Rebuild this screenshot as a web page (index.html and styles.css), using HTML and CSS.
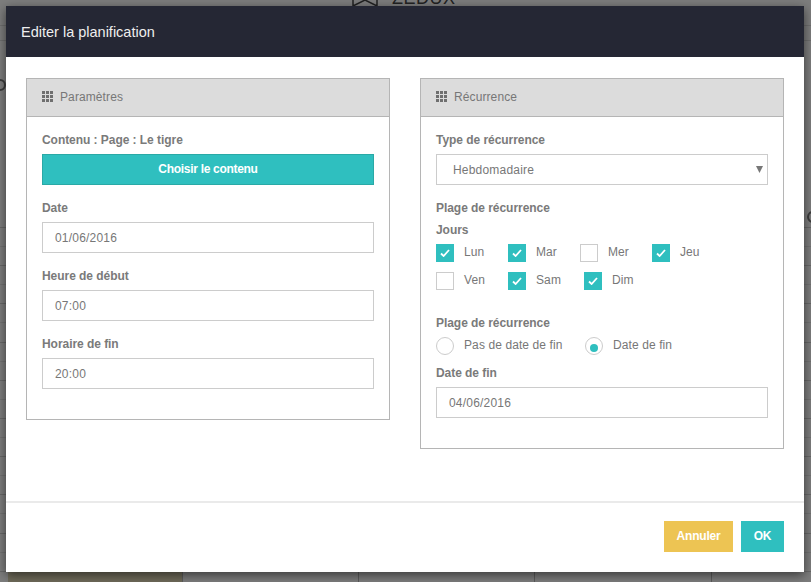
FILE: index.html
```html
<!DOCTYPE html>
<html lang="fr">
<head>
<meta charset="utf-8">
<title>Editer la planification</title>
<link rel="stylesheet" href="styles.css">
</head>
<body>
<div class="backdrop">
  <svg class="bg-star" width="26" height="7" viewBox="0 0 26 7"><path d="M1 -8V6L13 0 25 6V-8" fill="none" stroke="#222" stroke-width="1.500"/></svg>
  <span class="bg-logo">ZEDUX</span>
  <div class="bg-line bg-line-1"></div>
  <div class="bg-line bg-line-2"></div>
  <span class="bg-ring bg-ring-left"></span>
  <span class="bg-ring bg-ring-right"></span>
  <div class="bg-grid"></div>
  <div class="bg-block"></div>
</div>
<div class="modal">
  <header class="modal-head">Editer la planification</header>
  <div class="modal-body">
    <section class="panel panel-left">
      <div class="panel-head">
        <svg class="grid-icon" width="11" height="11" viewBox="0 0 11 11"><path d="M0 0h3v3H0zM4 0h3v3H4zM8 0h3v3H8zM0 4h3v3H0zM4 4h3v3H4zM8 4h3v3H8zM0 8h3v3H0zM4 8h3v3H4zM8 8h3v3H8z" fill="#6f6f6f"/></svg>
        <span>Paramètres</span>
      </div>
      <div class="panel-body">
        <div class="field">
          <div class="label">Contenu : Page : Le tigre</div>
          <button class="btn-wide">Choisir le contenu</button>
        </div>
        <div class="field">
          <div class="label">Date</div>
          <div class="input">01/06/2016</div>
        </div>
        <div class="field">
          <div class="label">Heure de début</div>
          <div class="input">07:00</div>
        </div>
        <div class="field">
          <div class="label">Horaire de fin</div>
          <div class="input">20:00</div>
        </div>
      </div>
    </section>
    <section class="panel panel-right">
      <div class="panel-head">
        <svg class="grid-icon" width="11" height="11" viewBox="0 0 11 11"><path d="M0 0h3v3H0zM4 0h3v3H4zM8 0h3v3H8zM0 4h3v3H0zM4 4h3v3H4zM8 4h3v3H8zM0 8h3v3H0zM4 8h3v3H4zM8 8h3v3H8z" fill="#6f6f6f"/></svg>
        <span>Récurrence</span>
      </div>
      <div class="panel-body">
        <div class="field">
          <div class="label">Type de récurrence</div>
          <div class="input select"><span>Hebdomadaire</span><svg class="caret" width="7" height="7" viewBox="0 0 7 7"><path d="M0 0h7L3.500 7z" fill="#777"/></svg></div>
        </div>
        <div class="label label-tight">Plage de récurrence</div>
        <div class="label label-days">Jours</div>
        <div class="days">
          <div class="check-row">
            <div class="check-item w72"><span class="box on"><svg width="10" height="8" viewBox="0 0 10 8"><path d="M1 4.500 3.600 7 9 1" fill="none" stroke="#fff" stroke-width="1.800"/></svg></span><span class="opt">Lun</span></div>
            <div class="check-item w72"><span class="box on"><svg width="10" height="8" viewBox="0 0 10 8"><path d="M1 4.500 3.600 7 9 1" fill="none" stroke="#fff" stroke-width="1.800"/></svg></span><span class="opt">Mar</span></div>
            <div class="check-item w72"><span class="box"></span><span class="opt">Mer</span></div>
            <div class="check-item"><span class="box on"><svg width="10" height="8" viewBox="0 0 10 8"><path d="M1 4.500 3.600 7 9 1" fill="none" stroke="#fff" stroke-width="1.800"/></svg></span><span class="opt">Jeu</span></div>
          </div>
          <div class="check-row">
            <div class="check-item w72"><span class="box"></span><span class="opt">Ven</span></div>
            <div class="check-item w76"><span class="box on"><svg width="10" height="8" viewBox="0 0 10 8"><path d="M1 4.500 3.600 7 9 1" fill="none" stroke="#fff" stroke-width="1.800"/></svg></span><span class="opt">Sam</span></div>
            <div class="check-item"><span class="box on"><svg width="10" height="8" viewBox="0 0 10 8"><path d="M1 4.500 3.600 7 9 1" fill="none" stroke="#fff" stroke-width="1.800"/></svg></span><span class="opt">Dim</span></div>
          </div>
        </div>
        <div class="label label-tight">Plage de récurrence</div>
        <div class="radio-row">
          <div class="check-item w149"><span class="radio"></span><span class="opt">Pas de date de fin</span></div>
          <div class="check-item"><span class="radio on"></span><span class="opt">Date de fin</span></div>
        </div>
        <div class="field">
          <div class="label">Date de fin</div>
          <div class="input">04/06/2016</div>
        </div>
      </div>
    </section>
  </div>
  <footer class="modal-foot">
    <button class="btn btn-cancel">Annuler</button>
    <button class="btn btn-ok">OK</button>
  </footer>
</div>
</body>
</html>
```
FILE: styles.css
```css
* { box-sizing: border-box; }
html, body { margin: 0; height: 100%; }
body {
  width: 811px; height: 582px; overflow: hidden; position: relative;
  background: #7d7d7d;
  font-family: "Liberation Sans", Arial, sans-serif;
  font-size: 12px; color: #777;
}
.backdrop { position: absolute; inset: 0; overflow: hidden; }
.bg-star { position: absolute; left: 352px; top: 0; }
.bg-logo { position: absolute; left: 392px; top: -12px; font-size: 18px; line-height: 20px; color: #222; letter-spacing: .5px; }
.bg-line { position: absolute; left: 0; right: 0; height: 1px; background: #6e6e6e; }
.bg-line-1 { top: 25px; }
.bg-line-2 { top: 40px; }
.bg-ring { position: absolute; width: 12px; height: 12px; border: 2px solid #3c3c3c; border-radius: 50%; }
.bg-ring-left { left: -6px; top: 79px; }
.bg-ring-right { left: 807px; top: 211px; }
.bg-grid {
  position: absolute; left: 0; right: 0; top: 227px; bottom: 0;
  background-image:
    linear-gradient(#5c5c5c, #5c5c5c), linear-gradient(#5c5c5c, #5c5c5c),
    linear-gradient(#5c5c5c, #5c5c5c), linear-gradient(#5c5c5c, #5c5c5c),
    repeating-linear-gradient(to bottom, #686868 0 1px, transparent 1px 38.200px),
    repeating-linear-gradient(to bottom, transparent 0 19px, #727272 19px 20px, transparent 20px 38.200px);
  background-size: 1px 100%, 1px 100%, 1px 100%, 1px 100%, auto, auto;
  background-position: 182px 0, 358px 0, 534px 0, 711px 0, 0 0, 0 0;
  background-repeat: no-repeat, no-repeat, no-repeat, no-repeat, repeat, repeat;
}
.bg-block {
  position: absolute; left: 8px; bottom: 0; width: 174px; height: 10px; background: #6f6b5a;
}
.modal {
  position: absolute; left: 6px; top: 6px; width: 798px; height: 566px;
  background: #fff; box-shadow: 0 3px 10px rgba(0,0,0,.55);
  display: flex; flex-direction: column;
}
.modal-head {
  height: 51px; flex: none; background: #252734; color: #eee;
  font-size: 14.500px; padding: 0 15px; display: flex; align-items: center;
}
.modal-body { flex: 1; display: flex; align-items: flex-start; gap: 30px; padding: 21px 20px 0; }
.panel { width: 364px; border: 1px solid #b5b5b5; }
.panel-left { height: 342px; }
.panel-right { height: 371px; }
.panel-head {
  height: 38px; background: #dcdcdc; border-bottom: 1px solid #b5b5b5;
  display: flex; align-items: center; gap: 7px; padding: 0 0 2px 15px; letter-spacing: .1px;
}
.grid-icon { flex: none; }
.panel-body { padding: 16px 15px 0; }
.field { margin-bottom: 16px; }
.label { font-weight: 700; line-height: 14px; height: 14px; margin-bottom: 7px; letter-spacing: -.05px; color: #7a7a7a; }
.label-tight { margin-bottom: 0; }
.label-days { margin-top: 8px; margin-bottom: 6px; }
.btn-wide {
  display: block; width: 100%; height: 31px; border: 1px solid #2aa9a6; background: #2fbfbf;
  color: #fff; font: 700 12px "Liberation Sans", Arial, sans-serif; letter-spacing: -.3px; padding: 0 0 2px;
}
.input {
  height: 31px; border: 1px solid #ccc; background: #fff; padding: 0 12px;
  display: flex; align-items: center; letter-spacing: .2px;
}
.select { justify-content: space-between; padding: 0 4px 0 16px; }
.days { margin-bottom: 17px; }
.check-row { display: flex; height: 28px; }
.check-item { display: flex; align-items: flex-start; gap: 10px; line-height: 14px; }
.opt { margin-top: 2px; letter-spacing: .1px; }
.w72 { width: 72px; }
.w76 { width: 76px; }
.w149 { width: 149px; }
.box {
  width: 18px; height: 18px; border: 1px solid #ccc; flex: none;
  display: flex; align-items: center; justify-content: center; margin-top: 1px;
}
.box.on { background: #2fbfbf; border-color: #2fbfbf; }
.radio-row { display: flex; height: 30px; margin-top: 6px; }
.radio {
  width: 18px; height: 18px; border: 1px solid #ccc; border-radius: 50%; flex: none;
  display: flex; align-items: center; justify-content: center; margin-top: 1px;
}
.radio.on::after { content: ""; width: 8px; height: 8px; border-radius: 50%; background: #2fbfbf; margin-top: 3px; }
.modal-foot {
  height: 71px; flex: none; border-top: 2px solid #eaeaea;
  display: flex; justify-content: flex-end; gap: 8px; padding: 18px 20px 0;
}
.btn { height: 31px; border: 0; color: #fff; font: 700 12px "Liberation Sans", Arial, sans-serif; letter-spacing: -.2px; padding: 0 0 2px; }
.btn-cancel { width: 69px; background: #edc453; }
.btn-ok { width: 43px; background: #2fbfbf; }
```
